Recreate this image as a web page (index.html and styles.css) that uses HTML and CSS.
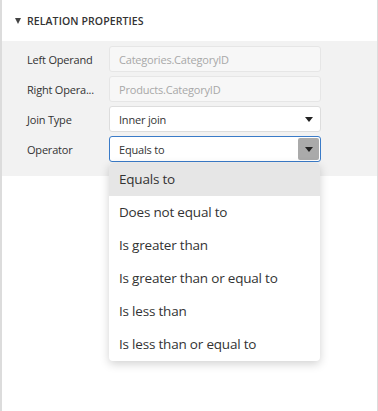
FILE: index.html
```html
<!DOCTYPE html>
<html lang="en">
<head>
<meta charset="UTF-8">
<meta name="viewport" content="width=device-width, initial-scale=1.0">
<title>Relation Properties</title>
<link rel="stylesheet" href="styles.css">
</head>
<body>

<div class="panel">
  <div class="group-header">
    <span class="caret"></span>
    <span class="group-title">Relation Properties</span>
  </div>

  <div class="group-body">
    <div class="prop-row">
      <div class="prop-label">Left Operand</div>
      <div class="editor disabled">Categories.CategoryID</div>
    </div>
    <div class="prop-row">
      <div class="prop-label">Right Opera...</div>
      <div class="editor disabled">Products.CategoryID</div>
    </div>
    <div class="prop-row">
      <div class="prop-label">Join Type</div>
      <div class="editor select">
        <span class="value">Inner join</span>
        <span class="drop-btn"><span class="arrow"></span></span>
      </div>
    </div>
    <div class="prop-row">
      <div class="prop-label">Operator</div>
      <div class="editor select focused">
        <span class="value">Equals to</span>
        <span class="drop-btn"><span class="arrow"></span></span>

        <ul class="dropdown">
          <li class="selected">Equals to</li>
          <li>Does not equal to</li>
          <li>Is greater than</li>
          <li>Is greater than or equal to</li>
          <li>Is less than</li>
          <li>Is less than or equal to</li>
        </ul>
      </div>
    </div>
  </div>
</div>

</body>
</html>
```

FILE: styles.css
```css
body {
  margin: 0;
  font-family: "Open Sans", "Noto Sans", Arial, sans-serif;
  color: #333;
}

.panel {
  width: 378px;
  height: 411px;
  box-sizing: border-box;
  border-left: 2px solid #dcdcdc;
  border-right: 1px solid #dcdcdc;
  background: #fff;
}

.group-header {
  height: 41px;
  display: flex;
  align-items: center;
  padding-left: 13px;
}

.caret {
  width: 0;
  height: 0;
  border-left: 3.5px solid transparent;
  border-right: 3.5px solid transparent;
  border-top: 6px solid #444;
  margin-right: 6px;
}

.group-title {
  font-size: 10.5px;
  font-weight: 600;
  text-transform: uppercase;
  letter-spacing: 0.1px;
  color: #333;
}

.group-body {
  background: #f2f2f2;
  padding: 5px 0 14px;
  display: flex;
  flex-direction: column;
  gap: 4px;
}

.prop-row {
  display: flex;
  align-items: center;
  height: 26px;
}

.prop-label {
  width: 82px;
  padding-left: 25px;
  font-size: 11px;
  letter-spacing: -0.2px;
  color: #333;
}

.editor {
  position: relative;
  width: 212px;
  height: 26px;
  box-sizing: border-box;
  border: 1px solid #ddd;
  border-radius: 3px;
  background: #fff;
  padding-left: 9px;
  display: flex;
  align-items: center;
  font-size: 11px;
  letter-spacing: -0.2px;
  color: #333;
}

.editor.disabled {
  background: #f7f7f7;
  border-color: #e6e6e6;
  color: #a8a8a8;
}

.editor .value {
  flex: 1;
}

.drop-btn {
  width: 21px;
  height: 22px;
  margin-right: 1px;
  border-radius: 2px;
  display: flex;
  align-items: center;
  justify-content: center;
}

.arrow {
  width: 0;
  height: 0;
  border-left: 4.5px solid transparent;
  border-right: 4.5px solid transparent;
  border-top: 5px solid #222;
}

.editor.focused {
  border-color: #3a7bc8;
}

.editor.focused .drop-btn {
  background: #aaa;
}

.dropdown {
  position: absolute;
  top: 26px;
  left: -1px;
  width: 211px;
  margin: 0;
  padding: 0;
  list-style: none;
  background: #fff;
  border-radius: 4px;
  box-shadow: 0 3px 10px rgba(0, 0, 0, 0.18);
  overflow: hidden;
  z-index: 10;
}

.dropdown li {
  height: 33px;
  line-height: 33px;
  padding-left: 10px;
  font-size: 13.5px;
  letter-spacing: -0.2px;
  color: #333;
}

.dropdown li.selected {
  background: #e6e6e6;
}
```
